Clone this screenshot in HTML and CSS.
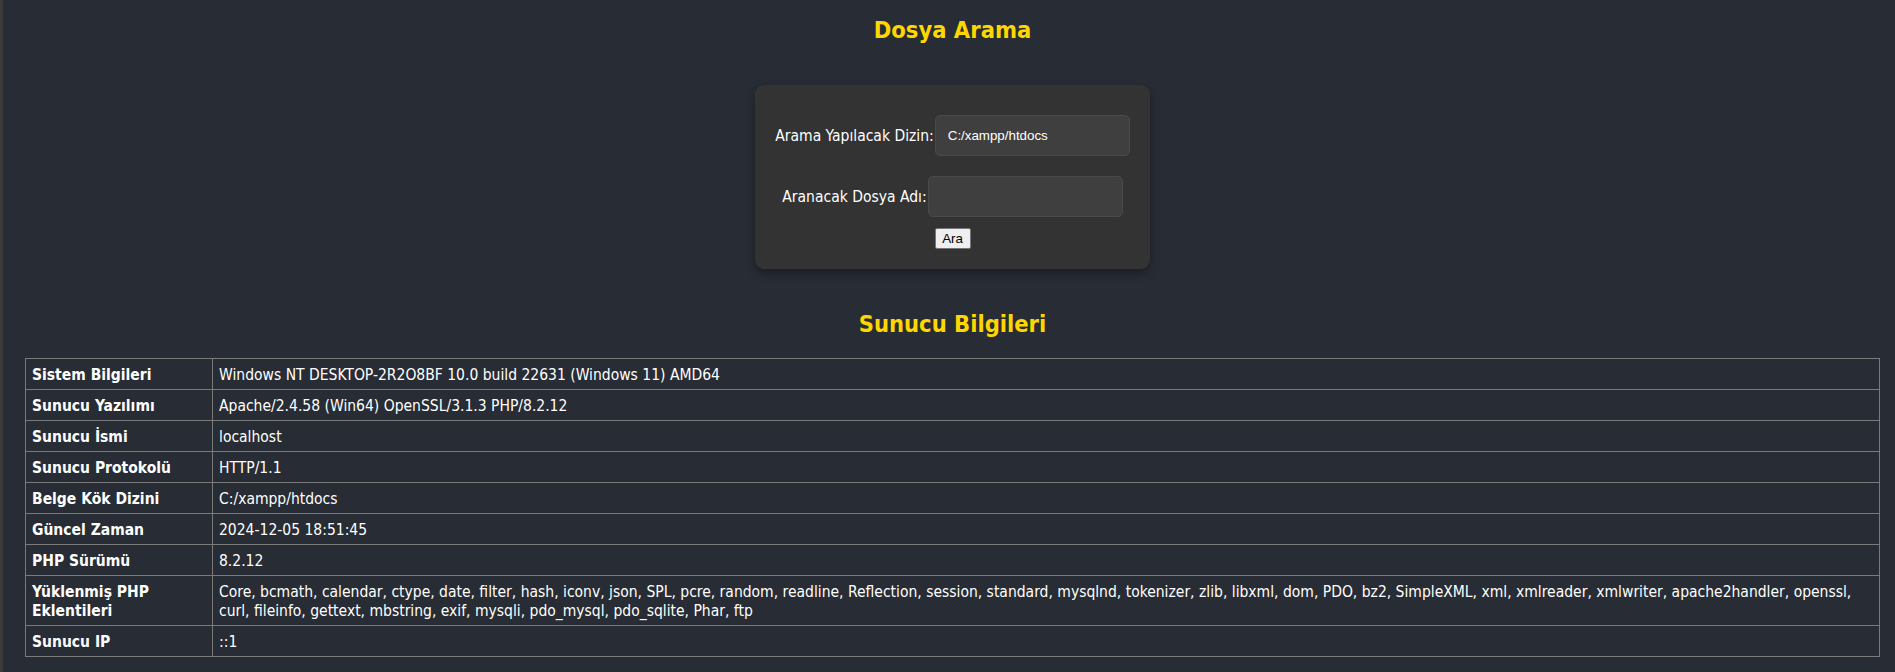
FILE: index.html
```html
<!DOCTYPE html>
<html lang="tr">
<head>
<meta charset="utf-8">
<title>Dosya Arama</title>
<link rel="stylesheet" href="styles.css">
</head>
<body>
<div class="page">
  <h2 class="title">Dosya Arama</h2>
  <form class="search-box">
    <div class="row">
      <label class="label" for="dir">Arama Yapılacak Dizin:</label><input class="field" id="dir" type="text" value="C:/xampp/htdocs">
    </div>
    <div class="row">
      <label class="label" for="name">Aranacak Dosya Adı:</label><input class="field" id="name" type="text" value="">
    </div>
    <div class="actions">
      <button class="btn" type="button">Ara</button>
    </div>
  </form>
  <h2 class="title title-info">Sunucu Bilgileri</h2>
  <table class="info">
    <tr><th>Sistem Bilgileri</th><td>Windows NT DESKTOP-2R2O8BF 10.0 build 22631 (Windows 11) AMD64</td></tr>
    <tr><th>Sunucu Yazılımı</th><td>Apache/2.4.58 (Win64) OpenSSL/3.1.3 PHP/8.2.12</td></tr>
    <tr><th>Sunucu İsmi</th><td>localhost</td></tr>
    <tr><th>Sunucu Protokolü</th><td>HTTP/1.1</td></tr>
    <tr><th>Belge Kök Dizini</th><td>C:/xampp/htdocs</td></tr>
    <tr><th>Güncel Zaman</th><td>2024-12-05 18:51:45</td></tr>
    <tr><th>PHP Sürümü</th><td>8.2.12</td></tr>
    <tr><th>Yüklenmiş PHP Eklentileri</th><td>Core, bcmath, calendar, ctype, date, filter, hash, iconv, json, SPL, pcre, random, readline, Reflection, session, standard, mysqlnd, tokenizer, zlib, libxml, dom, PDO, bz2, SimpleXML, xml, xmlreader, xmlwriter, apache2handler, openssl, curl, fileinfo, gettext, mbstring, exif, mysqli, pdo_mysql, pdo_sqlite, Phar, ftp</td></tr>
    <tr><th>Sunucu IP</th><td>::1</td></tr>
  </table>
</div>
</body>
</html>
```

FILE: styles.css
```css
html, body {
  margin: 0;
  padding: 0;
}
body {
  background: #282c34;
  color: #ffffff;
  font-family: "DejaVu Sans Condensed", "DejaVu Sans", sans-serif;
  font-size: 15.5px;
  border-left: 3px solid #3b3b3b;
  min-height: 672px;
  box-sizing: border-box;
}
.page {
  padding: 16px 15px 0 22px;
}
.title {
  margin: 0;
  font-size: 23.5px;
  line-height: 29px;
  font-weight: bold;
  color: #ffd700;
  text-align: center;
}
.title-info {
  margin: 41px 0 19px;
}
.search-box {
  width: 395px;
  box-sizing: border-box;
  margin: 40px auto 0;
  padding: 30px 20px 20px;
  background: #333333;
  border-radius: 9px;
  box-shadow: 0 4px 10px rgba(0, 0, 0, 0.35);
}
.row {
  display: flex;
  justify-content: center;
  align-items: center;
  margin-bottom: 20px;
}
.row + .row {
  margin-bottom: 11px;
}
.label {
  color: #ffffff;
  margin-right: 1px;
  white-space: nowrap;
  flex-shrink: 0;
}
.field {
  flex-shrink: 0;
  width: 195px;
  height: 41px;
  box-sizing: border-box;
  background: #3f3f3f;
  border: 1px solid #4a4a4a;
  border-radius: 5px;
  color: #ffffff;
  font-family: "Liberation Sans", Arial, sans-serif;
  font-size: 13.33px;
  padding: 0 12px;
  outline: none;
}
.actions {
  display: flex;
  justify-content: center;
}
.btn {
  font-family: "Liberation Sans", Arial, sans-serif;
  font-size: 13.33px;
  color: #000;
  background: #efefef;
  border: 1px solid #767676;
  border-radius: 2px;
  padding: 1px 6px;
  height: 21px;
  width: 36px;
}
.info {
  width: 100%;
  border-collapse: collapse;
  font-size: 15.5px;
  line-height: 19px;
}
.info th, .info td {
  border: 1px solid #7a7a7a;
  padding: 7px 5px 4px 6px;
  text-align: left;
  vertical-align: top;
}
.info th {
  width: 175px;
  font-weight: bold;
}
```
